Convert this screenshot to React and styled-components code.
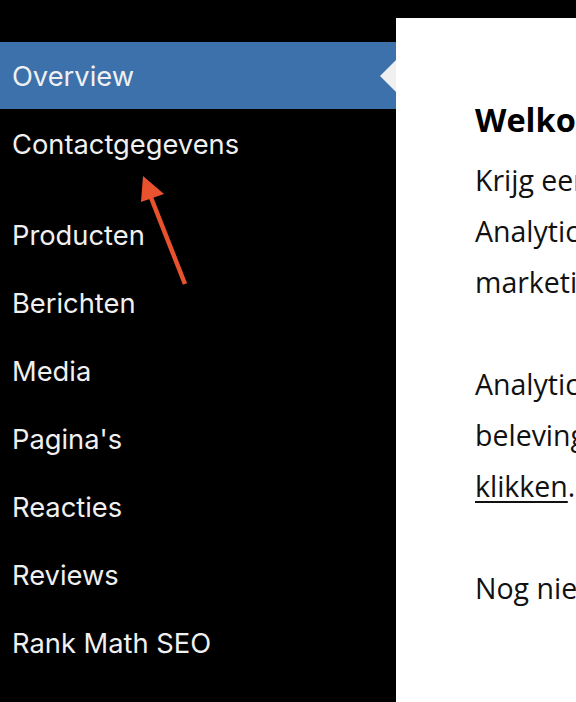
import React from "react";
import styled, { createGlobalStyle } from "styled-components";

const Global = createGlobalStyle`
  html, body { margin: 0; padding: 0; background: #000; }
  body { width: 576px; height: 702px; overflow: hidden; }
  #root { height: 702px; }
`;

const Page = styled.div`
  display: flex;
  height: 702px;
  background: #000;
  overflow: hidden;
`;

const Sidebar = styled.nav`
  flex: 0 0 396px;
  display: flex;
  flex-direction: column;
  padding-top: 42px;
  position: relative;
`;

const Item = styled.div`
  position: relative;
  height: ${(p) => (p.$active ? "67px" : "68px")};
  display: flex;
  align-items: center;
  padding: 2px 0 0 12px;
  box-sizing: border-box;
  font-family: Inter, "Liberation Sans", sans-serif;
  font-size: 27.3px;
  color: #f0f0f1;
  background: ${(p) => (p.$active ? "#3c71ac" : "transparent")};
  margin-bottom: ${(p) => (p.$gapAfter ? "23px" : "0")};
`;

const Notch = styled.span`
  position: absolute;
  right: 0;
  top: 18px;
  width: 0;
  height: 0;
  border-top: 16px solid transparent;
  border-bottom: 16px solid transparent;
  border-right: 16px solid #f0f0f1;
`;

const Arrow = styled.svg`
  position: absolute;
  left: 130px;
  top: 165px;
`;

const Content = styled.main`
  flex: 0 0 auto;
  width: 900px;
  margin-top: 18px;
  background: #fff;
  padding: 82px 0 0 79px;
  box-sizing: border-box;
  font-family: "Open Sans", "Liberation Sans", sans-serif;
  color: #1d2327;
`;

const Heading = styled.h2`
  margin: 0 0 15px;
  font-size: 32.5px;
  font-weight: 700;
  line-height: 40px;
  white-space: nowrap;
  color: #000;
`;

const Para = styled.p`
  margin: 0 0 51px;
  font-size: 28.5px;
  line-height: 51px;
  white-space: nowrap;
  color: #111;
`;

const Link = styled.a`
  color: #111;
  text-decoration: underline;
  text-decoration-thickness: 2px;
  text-underline-offset: 4px;
`;

const items = [
  "Contactgegevens",
  "Producten",
  "Berichten",
  "Media",
  "Pagina's",
  "Reacties",
  "Reviews",
  "Rank Math SEO",
];

export default function App() {
  return (
    <>
      <Global />
      <Page>
        <Sidebar>
          <Item $active>
            Overview
            <Notch />
          </Item>
          {items.map((t, i) => (
            <Item key={t} $gapAfter={i === 0}>
              {t}
            </Item>
          ))}
          <Arrow width="70" height="130" viewBox="0 0 70 130">
            <line x1="55" y1="119" x2="20" y2="30" stroke="#e8522e" strokeWidth="4.5" />
            <polygon points="13,11 11,37 34,29" fill="#e8522e" />
          </Arrow>
        </Sidebar>
        <Content>
          <Heading>Welkom bij Site Kit</Heading>
          <Para>
            Krijg een overzicht van je website met Google
            <br />
            Analytics, Search Console en andere tools voor
            <br />
            marketing en inzichten.
          </Para>
          <Para>
            Analytics helpt je bezoekers en hun gedrag te volgen, en
            <br />
            beleving te verbeteren. Meer informatie door hier te
            <br />
            <Link href="#">klikken</Link>.
          </Para>
          <Para>Nog niet verbonden met Google Analytics.</Para>
        </Content>
      </Page>
    </>
  );
}
